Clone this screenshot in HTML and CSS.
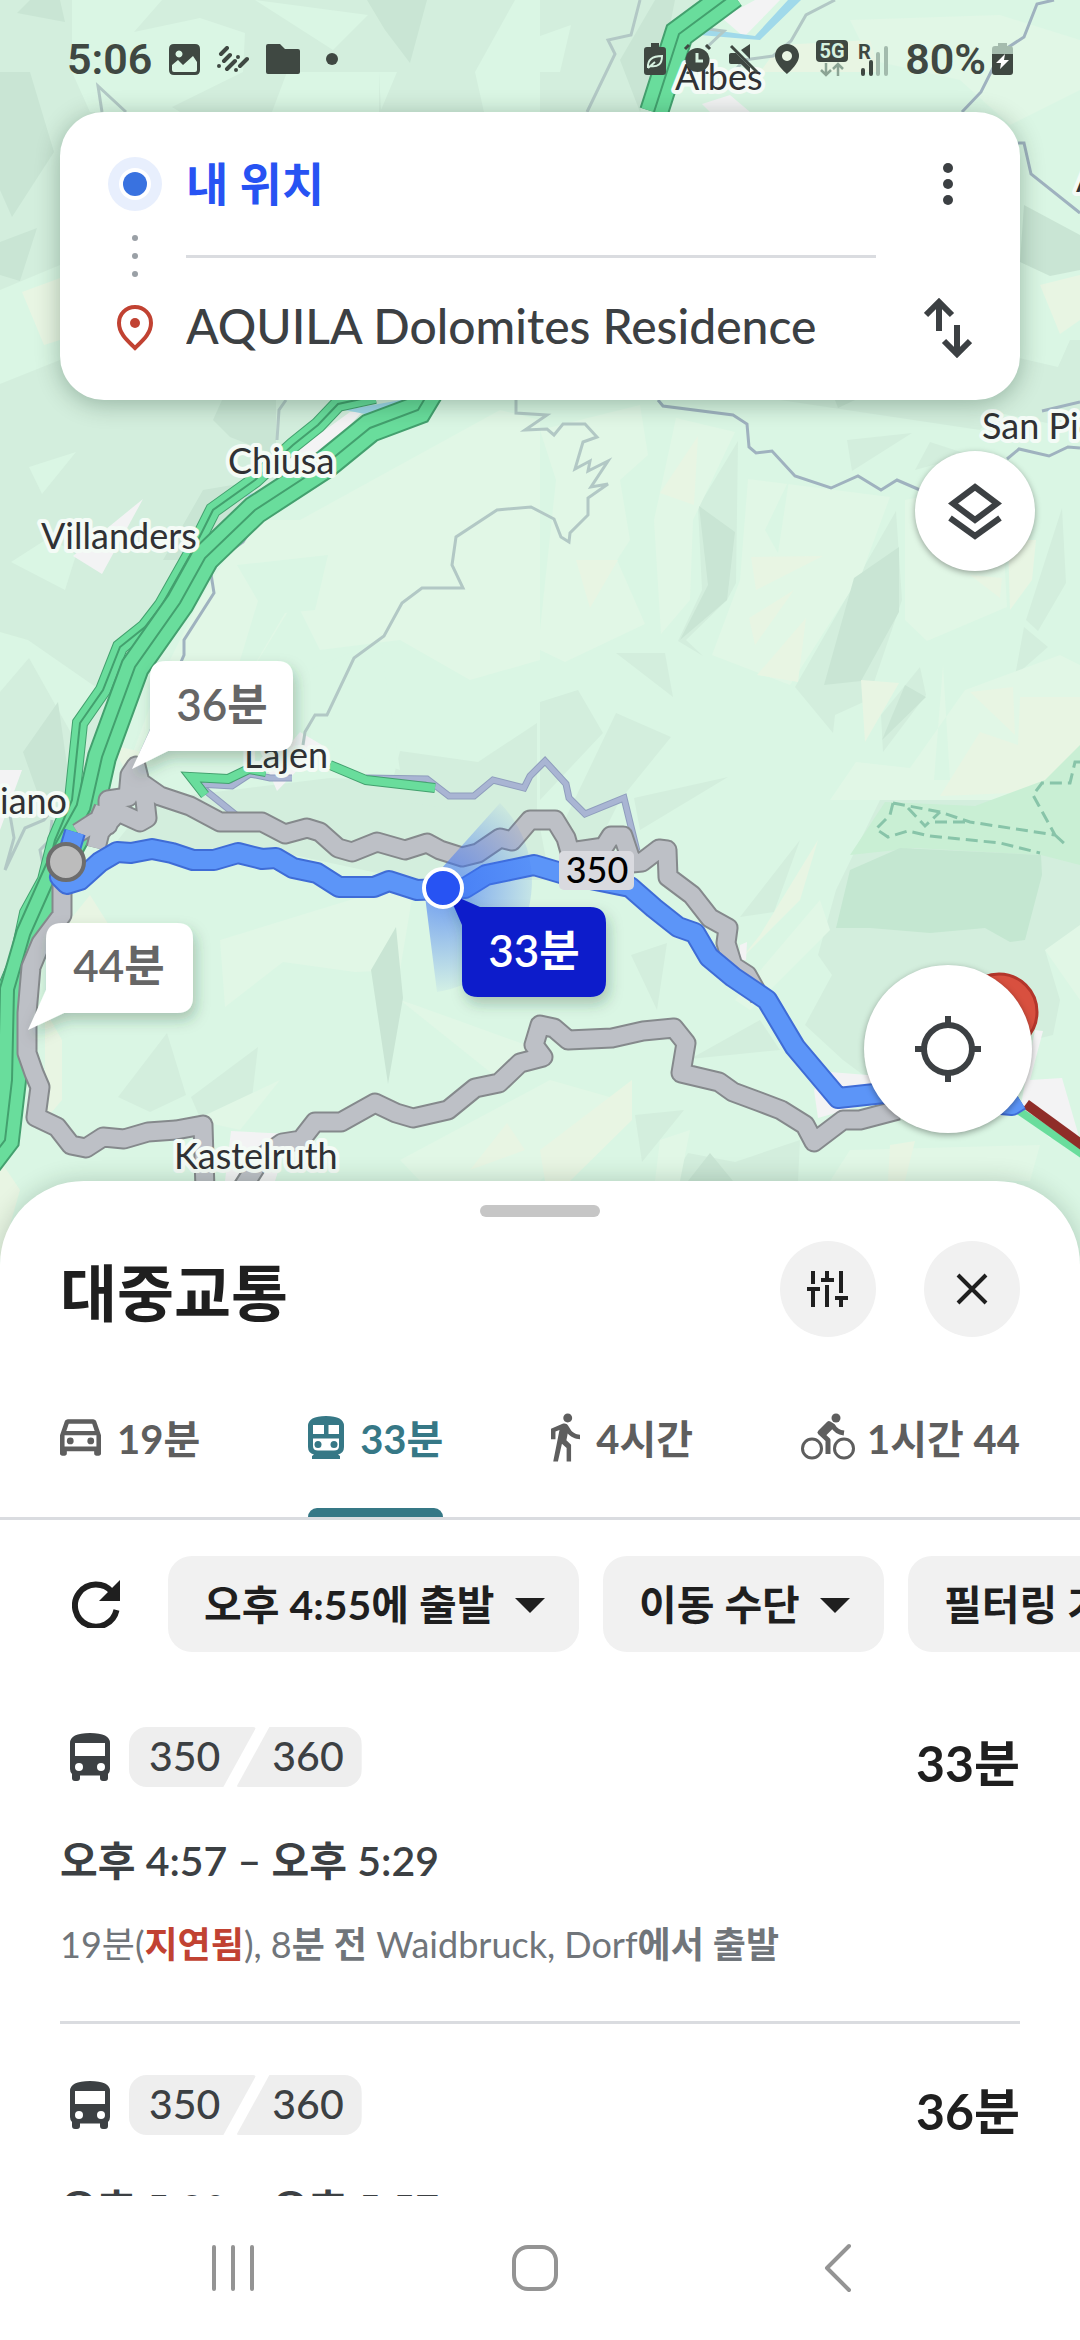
FILE: index.html
```html
<!DOCTYPE html>
<html lang="ko">
<head>
    <meta charset="UTF-8">
    <meta name="viewport" content="width=device-width, initial-scale=1.0">
    <title>대중교통 길찾기</title>
    <link rel="stylesheet" href="styles.css">
</head>
<body>
<div class="screen">
    <main class="map-area">
        <svg class="map" viewBox="0 0 1080 1265" preserveAspectRatio="xMinYMin slice" aria-hidden="true">
            <defs>
                <radialGradient id="beam" gradientUnits="userSpaceOnUse" cx="443" cy="889" r="110">
                    <stop offset="0" stop-color="#3d74f5" stop-opacity=".7"/>
                    <stop offset="1" stop-color="#3d74f5" stop-opacity="0"/>
                </radialGradient>
                <filter id="shadow" x="-20%" y="-20%" width="140%" height="150%">
                    <feDropShadow dx="3" dy="7" stdDeviation="7" flood-color="#1c4030" flood-opacity=".28"/>
                </filter>
            </defs>
            <!-- terrain -->
            <rect width="1080" height="1265" fill="#daf6e4"/>
            <g class="mid">
                <path d="M0 0H720L650 112 410 400 250 510 130 690 70 850 0 1010z"/>
                <path d="M150 800 330 778 440 782 530 775 550 880 410 880 270 850 110 850z"/>
                <path d="M540 702 578 690 603 733 540 800zM616 713 671 737 620 800 590 860 560 830zM616 653H665L673 697zM847 440 912 433 852 471zM930 442 970 455 915 470zM896 511 902 600 868 700 835 715 833 733 795 687z"/>
                <path d="M738 441 736 583 727 600 686 640 703 656 678 641 702 590 698 507zM920 667 926 695 883 752 881 715zM1062 508 1066 583 1038 631 1026 620zM1024 627 1048 647 1015 676zM388 800 400 751 478 762 537 723V820zM634 798 728 777 640 830z"/>
                <path d="M843 1060 805 1025 832 975 818 955 836 890 880 800 1080 790V955L1045 950 1060 1000 1053 1035 870 1080z"/>
                <path d="M167 1033 186 1095 150 1112 118 1097zM258 1047 252 1098 200 1118 191 1097zM740 917 800 840 774 912zM631 955 667 943 657 1010zM690 1059 760 1020 780 1050zM635 1115 684 1110 642 1162zM688 1153 735 1162 800 1140 798 1181H670zM1015 357 1058 367 1070 340 1080 340V430L985 410zM780 400 860 390 1000 400 980 430z"/>
            </g>
            <g class="base">
                <path d="M72 0H162L134 32 200 18 245 33 243 72 172 107 180 112H90L72 72zM255 0 368 15 333 50zM287 72H379L379 112H272zM379 72H397L381 110zM515 0H540V72L475 72zM475 72H540V112H484zM540 36 571 25 560 72H540z"/>
                <path d="M29 467 76 452 42 494zM50 537 11 562 65 590 76 555zM0 632 28 640 100 690 75 740 29 658 0 692zM0 110 20 104V155L0 162zM0 290 60 265V360L0 384z"/>
            </g>
            <g class="light">
                <path d="M300 520 500 410 540 420V660L470 680 400 640 320 650 295 600 240 690 150 760 130 760 160 680 200 600 250 520zM540 630 556 480 540 430 640 405 648 455 620 480 630 540 617 560 645 624 565 662 540 650z"/>
                <path d="M676 418 735 432 693 520 690 600 661 634 654 520zM748 479 890 497 862 573 790 685 712 655 740 580zM905 500 1000 480 1007 607 927 641 905 620zM830 800 856 762 910 768 965 690 1060 655 1080 665V800zM943 665 934 780 950 780z"/>
                <path d="M220 940 415 880 400 970 355 972 283 962 225 1007zM415 1005 540 1050 500 1080 400 1000zM195 1120 280 1080 240 1130zM850 20 1000 15 1080 40V90L1010 125 960 80 870 60zM620 1100 550 1080 400 1160 420 1181H540zM820 900 735 1000 750 1010 830 930zM1045 950 1080 925V1000zM660 1140 690 1130 680 1181H655zM850 1150 1040 1145 1030 1181H830z"/>
            </g>
            <path class="base" d="M237 565 328 555 315 610 285 613 222 720 258 601zM789 480 778 553 765 530zM380 640 400 770 310 740 285 680z"/>
            <g class="dark">
                <path d="M367 0H427L410 63 385 30zM0 72H30L54 152 12 217 0 190zM30 0H60L65 22 17 13zM0 242 37 228 20 281 0 275zM655 0H675L667 40 640 112 620 60zM222 400H276V455L230 437 213 420zM203 490 262 480 200 560 163 560zM58 702 72 800H40L23 752zM1024 205 1080 235V270L1050 276 1020 262zM835 400H855L838 408z"/>
                <path d="M699 506 735 532 727 600 680 640 708 585zM899 547V612L861 681 824 685 854 578zM905 685 926 697 882 740zM396 927 403 998 388 1084 371 970zM710 1153 733 1181H688z"/>
            </g>
            <g class="sand">
                <path d="M698 436 694 505 660 493zM751 557 823 556 756 590zM749 618 794 590 755 645zM806 618 798 682 757 675zM861 680 899 683 865 742zM576 560H618L590 608zM970 575 1002 578 1000 598zM1008 540H1036L1032 580 1010 610zM940 796 980 732 1018 745 1020 697H1080V790zM970 692 1013 687 1015 735zM760 72 780 45 870 40 880 72zM1040 285 1080 275V320L1060 334z"/>
                <path d="M22 292 60 278V340L44 345zM90 895 112 930 70 980V920zM45 1010 62 1040V1100L45 1120zM112 745 142 752 125 770zM632 1080V1120L570 1181H545L540 1150zM507 1123 525 1150 470 1170zM890 1145 915 1141 905 1181H888zM0 1160 20 1190 0 1260zM818 840 760 935 740 960 800 900z"/>
            </g>
            <path fill="#c9efd4" d="M885 802 975 806 1045 780 1080 745V865L1041 855 915 848 850 855z"/>
            <path fill="#c4e7d1" d="M850 870 900 848 1041 855 1042 875 1025 940 1010 942 985 928 930 933 870 928 836 928z"/>
            <g fill="#f3f3f4">
                <path d="M722 18 755 0H780L744 37zM702 104 730 95 750 112H710zM350 412 362 412 325 452 250 480 270 470zM143 499 102 574 73 556zM0 770 22 770 0 830zM300 732 322 745 277 791 268 770zM231 1131 290 1134 275 1181H225zM740 945 747 942 746 960 740 960zM830 1072 880 1076V1100L818 1118 814 1090zM1035 1030 1043 1031 1030 1080 1062 1078 1080 1140 1050 1138 1020 1110z"/>
            </g>
            <path fill="#a0d9ea" d="M788 0H801L760 40 735 38 700 35 706 29 755 36zM345 410 412 398 370 415zM240 497 275 487 262 495z"/>

            <!-- minor roads -->
            <g class="lane">
                <path d="M640 0 631 35 608 40 615 54 587 112M102 112 98 86 126 112M835 0 806 15 791 41 773 56 744 60 727 80M700 28 724 31 706 48"/>
                <path d="M516 400V413L547 415 525 430 547 429 554 435 563 424H585L597 437 583 442 575 469 590 461 588 471 608 461 591 487 608 484 588 498V515L570 533 569 542 561 537 554 519 531 507 497 510 456 537 452 565 463 588H422L402 603 384 636 354 658 327 715H315L305 732 303 745M286 400 279 410 277 440"/>
                <path d="M10 815 14 838 5 870 25 828 44 820 52 810M52 820 50 840 40 850 46 880"/>
            </g>
            <g class="road">
                <path d="M1054 0 1037 4 1024 37 1001 52 981 92 962 112M1018 143H1024L1031 174 1080 213M658 400 663 406 733 415 747 424 749 447 756 453 772 451 795 476 831 488 858 476 881 490 897 480 920 490M1007 459 1019 449 1049 456 1068 447 1080 448M1042 411 1080 402M254 525 243 542 222 557 211 574 214 593 184 640V655L181 662M152 728 140 755"/>
            </g>
            <g class="street">
                <path id="street" d="M191 777 205 790 236 815M198 784 232 786 250 774 270 778 292 778M366 778 427 779 449 796H474L493 780 524 788 530 776 545 761 566 784 569 798 585 814 624 798 637 851"/>
                <use class="street-fill" href="#street"/>
            </g>
            <g class="green small">
                <path id="lajen" d="M205 795 191 777 228 779 249 769 266 772M330 765 366 780 435 788"/>
                <use class="green-fill" href="#lajen"/>
            </g>

            <!-- motorway and state road -->
            <g class="green thin">
                <path id="west" d="M375 396 338 404 318 425 293 445 255 480 213 510 193 550 162 605 145 627 120 647 103 690 80 723 72 800 55 840 45 880 27 913 17 960 0 1000"/>
                <use class="green-fill" href="#west"/>
                <use class="green-mid" href="#west"/>
            </g>
            <g class="green wide">
                <path id="east" d="M733 -6 679 34 654 112M436 380 418 410 370 428 327 463 255 510 205 558 180 603 135 667 102 757 90 810 68 850 50 890 30 935 14 990 12 1080 5 1140 -14 1165"/>
                <use class="green-fill" href="#east"/>
                <use class="green-mid" href="#east"/>
            </g>
            <path fill="none" stroke="#69dd9c" stroke-width="8" d="M1018 1110 1085 1156"/>
            <path fill="none" stroke="#8f2d28" stroke-width="10" d="M1026 1104 1085 1147"/>

            <!-- park outline -->
            <path class="park" d="M893 803 890 815 876 829 888 837 908 831 930 836 1000 843 1040 853M893 803 940 812 970 822 1055 835 1033 795 1042 783H1070L1075 762H1085M908 808 925 826 940 812M935 822H970M1055 835 1066 845"/>

            <!-- alternative routes -->
            <g class="alt">
                <path id="alt-north" d="M78 833 95 822 108 825 108 800 128 797 130 775 136 766 140 782 160 796 190 806 220 822H262L285 834 307 828 320 832 338 848 352 852 377 842 405 850 427 843 440 850 462 857 478 853 500 838 512 841 530 820 555 820 566 838 570 852 604 847 611 836H623L632 863 642 862 659 849 667 850 668 877 692 895 710 918 728 928 726 943 733 966 747 975 760 998M136 775 145 800 147 818 140 822 118 812 100 832 96 848M104 808 92 836"/>
                <path id="alt-south" d="M62 880 62 915 41 943 31 967 27 1013V1053L34 1073 40 1087 36 1117 57 1127 71 1145 86 1148 103 1137 124 1139 148 1132 176 1130 203 1125 205 1190M241 1190 262 1157 282 1143 301 1140 315 1122H341L375 1103 396 1113 413 1118 448 1110 475 1088 499 1083 520 1063 543 1057 534 1045 540 1025 554 1028 568 1040 612 1038 643 1031 674 1028 686 1043 681 1073 719 1082 733 1092 760 1102 781 1110 805 1125 814 1142 843 1120H860L898 1110"/>
                <use class="alt-fill" href="#alt-north"/>
                <use class="alt-fill" href="#alt-south"/>
            </g>

            <!-- selected route -->
            <g class="route">
                <path id="route" d="M75 832 66 862 60 877 67 884 80 880 100 862 117 852 131 853 152 849 172 853 193 860H214L238 853 262 859 276 858 293 868 317 873 339 887H374L389 881 417 890 443 889 465 888 486 875 510 870 534 865 561 873 630 887 654 908 678 927 695 933 709 957 733 977 767 1000 795 1047 838 1098 884 1093 1012 1105 1020 1100"/>
                <use class="route-fill" href="#route"/>
            </g>
            <path fill="url(#beam)" d="M424 888 500 803A112 112 0 0 1 437 992z"/>

            <!-- place names -->
            <g class="place">
                <text x="675" y="90">Albes</text>
                <text x="228" y="474">Chiusa</text>
                <text x="41" y="549">Villanders</text>
                <text x="244" y="768">Lajen</text>
                <text x="0" y="814">iano</text>
                <text x="174" y="1169">Kastelruth</text>
                <text x="982" y="439">San Pietro</text>
                <text x="1076" y="192">A</text>
            </g>
            <rect x="559" y="851" width="75" height="39" rx="5" fill="#d9dadf"/>
            <text class="line-no" x="597" y="883">350</text>

            <!-- markers -->
            <circle cx="66" cy="862" r="18" fill="#bcbcbc" stroke="#6d6d6d" stroke-width="4"/>
            <circle cx="999" cy="1012" r="38" fill="#d8503f" stroke="#b3362b" stroke-width="3"/>

            <!-- travel time callouts -->
            <g filter="url(#shadow)">
                <path fill="#fff" d="M166 661H277Q293 661 293 677V735Q293 751 277 751H168L132 769 150 730V677Q150 661 166 661z"/>
                <path fill="#fff" d="M62 923H177Q193 923 193 939V997Q193 1013 177 1013H64L28 1030 46 990V939Q46 923 62 923z"/>
                <path fill="#0b1bcb" d="M480 907H590Q606 907 606 923V981Q606 997 590 997H478Q462 997 462 981V925L448 893z"/>
            </g>
            <text class="callout" x="222" y="721">36분</text>
            <text class="callout" x="119" y="982">44분</text>
            <text class="callout on" x="534" y="967">33분</text>
            <circle cx="443" cy="888" r="19" fill="#2753f3" stroke="#fff" stroke-width="4"/>
        </svg>

        <header class="status-bar">
            <div class="status-group">
                <span class="clock">5:06</span>
                <svg width="31" height="31" viewBox="0 0 31 31"><path fill="currentColor" fill-rule="evenodd" d="M5 0H26Q31 0 31 5V26Q31 31 26 31H5Q0 31 0 26V5Q0 0 5 0zM10 6.500a3.500 3.500 0 1 0 .01 0zM3 21V26Q3 28 5 28H26Q28 28 28 26V18L24 12 14 21 9 16z"/></svg>
                <svg width="32" height="26" viewBox="0 0 32 26" fill="none" stroke="currentColor" stroke-width="4" stroke-linecap="round"><path d="M4 8 10 2M2 20 2 20M7 15 13 9M10 23 18 15M21 11 21 11M19 24 19 24M23 20 30 13"/></svg>
                <svg width="34" height="30" viewBox="0 0 34 30" fill="currentColor"><path d="M2 0H14L19 5H32Q34 5 34 7V28Q34 30 32 30H2Q0 30 0 28V2Q0 0 2 0z"/></svg>
                <span class="more-dot"></span>
            </div>
            <div class="status-group">
                <svg width="22" height="32" viewBox="0 0 22 32"><path fill="currentColor" d="M7 0H15V4H19Q22 4 22 7V29Q22 32 19 32H3Q0 32 0 29V7Q0 4 3 4H7z"/><path d="M4 25Q3 13 18 13 18 25 6 23M4 25 11 19" fill="none" stroke="#d6f1e0" stroke-width="2"/></svg>
                <svg width="29" height="30" viewBox="0 0 29 30"><circle cx="14.500" cy="16" r="12" fill="currentColor"/><path d="M2 5 6 1M27 5 23 1M6 28 4 30M23 28 25 30" stroke="currentColor" stroke-width="3"/><path d="M14 9V17H20" fill="none" stroke="#d6f1e0" stroke-width="3"/></svg>
                <svg width="29" height="30" viewBox="0 0 29 30" fill="currentColor"><path d="M2 9H7L21 23V29L12 20H2Q0 20 0 18V11Q0 9 2 9zM12 6 21 0V15z"/><path d="M2 2 28 28" stroke="currentColor" stroke-width="3"/></svg>
                <svg width="24" height="30" viewBox="0 0 24 30"><path fill="currentColor" fill-rule="evenodd" d="M12 0A12 12 0 0 1 24 12C24 20 12 30 12 30S0 20 0 12A12 12 0 0 1 12 0zM12 7a5 5 0 1 0 .01 0z"/></svg>
                <svg class="signal" width="72" height="38" viewBox="0 0 72 38"><rect width="32" height="22" rx="4" fill="currentColor"/><text class="net" x="16" y="18">5G</text><g fill="none" stroke="#8ba494" stroke-width="2.500"><path d="M10 23V35M5 30 10 35 15 30M22 36V24M17 29 22 24 27 29"/></g><text class="roam" x="42" y="19">R</text><path d="M47 30V34M55 22V34" stroke="currentColor" stroke-width="4" stroke-linecap="round"/><path d="M62 14V34M70 8V34" stroke="#a3bbad" stroke-width="4" stroke-linecap="round"/></svg>
                <span class="battery">
                    <span class="clock">80%</span>
                    <svg width="21" height="32" viewBox="0 0 21 32"><path fill="#a5bcae" d="M6 0H15V3H18Q21 3 21 6V12H0V6Q0 3 3 3H6z"/><path fill="currentColor" d="M0 11H21V29Q21 32 18 32H3Q0 32 0 29z"/><path fill="#fff" d="M13 11 4 20H9L8 26 17 17H12z"/></svg>
                </span>
            </div>
        </header>

        <form class="search-card">
            <label class="lead" for="from">
                <svg width="54" height="54" viewBox="0 0 54 54"><circle cx="27" cy="27" r="27" fill="#e8effd"/><circle cx="27" cy="27" r="16" fill="#fff"/><circle cx="27" cy="27" r="12" fill="#3972e0"/></svg>
            </label>
            <input class="place-input from" id="from" type="text" value="내 위치" aria-label="출발지">
            <button class="icon-button" type="button" aria-label="더보기">
                <svg width="12" height="44" viewBox="0 0 12 44" fill="#3c4043"><circle cx="6" cy="6" r="5"/><circle cx="6" cy="22" r="5"/><circle cx="6" cy="38" r="5"/></svg>
            </button>
            <div class="lead">
                <svg width="6" height="42" viewBox="0 0 6 42" fill="#9aa0a6"><circle cx="3" cy="3" r="3"/><circle cx="3" cy="21" r="3"/><circle cx="3" cy="39" r="3"/></svg>
            </div>
            <hr class="divider">
            <span></span>
            <label class="lead" for="to">
                <svg width="36" height="46" viewBox="0 0 36 46"><path d="M18 2C27 2 34 9 34 18 34 29 25 36 18 43 11 36 2 29 2 18 2 9 9 2 18 2z" fill="none" stroke="#c14232" stroke-width="4"/><circle cx="18" cy="18" r="5" fill="#c14232"/></svg>
            </label>
            <input class="place-input" id="to" type="text" value="AQUILA Dolomites Residence" aria-label="도착지">
            <button class="icon-button" type="button" aria-label="출발지와 도착지 바꾸기">
                <svg width="48" height="60" viewBox="0 0 48 60" fill="none" stroke="#3c4043" stroke-width="6"><path d="M15 33V5M2 17 15 4 28 17M33 27V55M20 43 33 56 46 43"/></svg>
            </button>
        </form>

        <button class="layers" aria-label="지도 레이어">
            <svg width="54" height="58" viewBox="0 0 54 58" fill="none" stroke="#3c4043" stroke-width="6"><path d="M27 5 49 21.500 27 38 5 21.500zM2 36 27 54 52 36"/></svg>
        </button>
        <button class="locate" aria-label="현재 위치">
            <svg width="66" height="66" viewBox="0 0 66 66" fill="none" stroke="#3c4043" stroke-width="6"><circle cx="33" cy="33" r="24"/><path d="M33 0V10M33 56V66M0 33H10M56 33H66"/></svg>
        </button>
    </main>

    <section class="sheet">
        <div class="handle"></div>
        <div class="sheet-head">
            <h1>대중교통</h1>
            <button class="round" aria-label="옵션">
                <svg width="42" height="36" viewBox="0 0 42 36" fill="none" stroke="#1f1f1f" stroke-width="4"><path d="M6 0V13M0 18H13M6 18V36M20 0V8M14 9H27M20 14V36M34 0V22M28 27H41M34 27V36"/></svg>
            </button>
            <button class="round" aria-label="닫기">
                <svg width="32" height="32" viewBox="0 0 32 32" fill="none" stroke="#1f1f1f" stroke-width="4"><path d="M2 2 30 30M30 2 2 30"/></svg>
            </button>
        </div>

        <nav class="tabs">
            <button class="tab">
                <svg width="41" height="37" viewBox="3 4 18 16" fill="currentColor"><path d="M18.920 5.010C18.720 4.420 18.160 4 17.500 4h-11c-.66 0-1.210.42-1.420 1.010L3 11v8c0 .55.45 1 1 1h1c.55 0 1-.45 1-1v-1h12v1c0 .55.45 1 1 1h1c.55 0 1-.45 1-1v-8zM6.850 6h10.290l1.080 3.110H5.770zM19 16H5v-5h14z"/><circle cx="7.500" cy="13.500" r="1.500"/><circle cx="16.500" cy="13.500" r="1.500"/></svg>
                19분
            </button>
            <button class="tab active">
                <svg width="36" height="43" viewBox="0 0 36 43" fill="currentColor"><path fill-rule="evenodd" d="M0 10Q0 0 18 0T36 10V31Q36 37 30 38.500L32 40V43H4V40L6 38.500Q0 37 0 31zM5 9V18H16V9zM20.500 9V18H31V9zM5 22.500V30Q5 34.500 10 34.500H26Q31 34.500 31 30V22.500z"/><circle cx="10" cy="28.500" r="3.500"/><circle cx="26" cy="28.500" r="3.500"/></svg>
                33분
            </button>
            <button class="tab">
                <svg width="29" height="49" viewBox="6 1.500 13 21.500" fill="currentColor"><path d="M13.500 5.500c1.100 0 2-.9 2-2s-.9-2-2-2-2 .9-2 2 .9 2 2 2zM9.800 8.900L7 23h2.100l1.800-8 2.100 2v6h2v-7.500l-2.100-2 .6-3C14.800 12 16.800 13 19 13v-2c-1.900 0-3.500-1-4.300-2.400l-1-1.600c-.4-.6-1-1-1.700-1-.3 0-.5.1-.8.1L6 8.300V13h2V9.600l1.800-.7"/></svg>
                4시간
            </button>
            <button class="tab">
                <svg width="54" height="48" viewBox="0 0 54 48" fill="none" stroke="currentColor"><g stroke-width="3"><circle cx="11" cy="35.500" r="9.500"/><circle cx="43" cy="35.500" r="9.500"/></g><circle cx="35" cy="5" r="4.500" fill="currentColor" stroke="none"/><path stroke-width="5" stroke-linejoin="round" d="M43 20Q35 19 32 13L28 10.500 19 19.500 27 27V41"/><path stroke-width="5" d="M31 13 22 22"/></svg>
                1시간 44
            </button>
        </nav>

        <div class="filters">
            <button class="refresh" aria-label="새로고침">
                <svg width="48" height="48" viewBox="0 0 48 48"><path d="M40 12A21 21 0 1 0 44.500 30" fill="none" stroke="#1f1f1f" stroke-width="6"/><path d="M48 0V21H27z" fill="#1f1f1f"/></svg>
            </button>
            <label class="chip">
                <select aria-label="출발 시간"><option>오후 4:55에 출발</option></select>
                <svg width="30" height="15" viewBox="0 0 30 15"><path d="M0 0H30L15 15z" fill="#1f1f1f"/></svg>
            </label>
            <label class="chip">
                <select aria-label="이동 수단"><option>이동 수단</option></select>
                <svg width="30" height="15" viewBox="0 0 30 15"><path d="M0 0H30L15 15z" fill="#1f1f1f"/></svg>
            </label>
            <label class="chip">
                <select aria-label="필터링 기준"><option>필터링 기준</option></select>
                <svg width="30" height="15" viewBox="0 0 30 15"><path d="M0 0H30L15 15z" fill="#1f1f1f"/></svg>
            </label>
        </div>

        <ul class="results">
            <li class="result">
                <div class="lines">
                    <svg class="bus" width="40" height="48" viewBox="0 0 40 48"><path fill="#3c4043" fill-rule="evenodd" d="M0 10Q0 0 20 0T40 10V36Q40 39 38 41V45Q38 48 35 48H33Q30 48 30 45V42.500H10V45Q10 48 7 48H5Q2 48 2 45V41Q0 39 0 36zM5 10V23H35V10z"/><circle cx="9" cy="34" r="4" fill="#fff"/><circle cx="31" cy="34" r="4" fill="#fff"/></svg>
                    <span class="badge first">350</span>
                    <span class="badge last">360</span>
                    <strong class="duration">33분</strong>
                </div>
                <p class="times">오후 4:57 – 오후 5:29</p>
                <p class="depart">19분(<b class="late">지연됨</b>), 8<span class="strong">분 전</span> Waidbruck, Dorf<span class="strong">에서 출발</span></p>
            </li>
            <li class="result">
                <div class="lines">
                    <svg class="bus" width="40" height="48" viewBox="0 0 40 48"><path fill="#3c4043" fill-rule="evenodd" d="M0 10Q0 0 20 0T40 10V36Q40 39 38 41V45Q38 48 35 48H33Q30 48 30 45V42.500H10V45Q10 48 7 48H5Q2 48 2 45V41Q0 39 0 36zM5 10V23H35V10z"/><circle cx="9" cy="34" r="4" fill="#fff"/><circle cx="31" cy="34" r="4" fill="#fff"/></svg>
                    <span class="badge first">350</span>
                    <span class="badge last">360</span>
                    <strong class="duration">36분</strong>
                </div>
                <p class="times">오후 5:20 – 오후 5:57</p>
            </li>
        </ul>

        <nav class="system-nav">
            <button aria-label="최근 앱">
                <svg width="42" height="48" viewBox="0 0 42 48" fill="none" stroke="#949494" stroke-width="4" stroke-linecap="round"><path d="M2 3V45M21 3V45M40 3V45"/></svg>
            </button>
            <button aria-label="홈">
                <svg width="48" height="48" viewBox="0 0 48 48" fill="none" stroke="#949494" stroke-width="4"><rect x="3" y="3" width="42" height="42" rx="14"/></svg>
            </button>
            <button aria-label="뒤로">
                <svg width="28" height="50" viewBox="0 0 28 50" fill="none" stroke="#949494" stroke-width="4" stroke-linecap="round" stroke-linejoin="round"><path d="M25 3 3 25 25 47"/></svg>
            </button>
        </nav>
    </section>
</div>
</body>
</html>
```
FILE: styles.css
```css
* {
    box-sizing: border-box;
}
body {
    margin: 0;
    background: #fff;
    color: #1f1f1f;
    font-family: Lato, "Noto Sans CJK KR", sans-serif;
    font-size: 40px;
}
button {
    display: flex;
    align-items: center;
    justify-content: center;
    padding: 0;
    border: none;
    background: none;
    color: inherit;
    font: inherit;
    cursor: pointer;
}
svg {
    flex: none;
    display: block;
}
.screen {
    display: flex;
    flex-direction: column;
    height: 100vh;
    overflow: hidden;
}

/* Map */
.map-area {
    position: relative;
    flex: 1;
    display: flex;
    flex-direction: column;
    padding-bottom: 132px;
}
.map {
    position: absolute;
    top: 0;
    left: 0;
    width: 100%;
    height: 100%;
}
.mid { fill: #d3eedd; }
.base { fill: #daf6e4; }
.light { fill: #e1f7e6; }
.dark { fill: #c9e5d4; }
.sand { fill: #e8f5e3; }
.lane {
    fill: none;
    stroke: #b2c8c5;
    stroke-width: 3;
}
.road {
    fill: none;
    stroke: #9fb2bf;
    stroke-width: 3;
}
.street {
    fill: none;
    stroke: #8f9dbd;
    stroke-width: 7;
}
.street-fill {
    stroke: #a9b5d3;
    stroke-width: 5;
}
.green {
    fill: none;
    stroke: #43a06e;
}
.green-fill { stroke: #69dd9c; }
.green-mid {
    stroke: #43a06e;
    stroke-width: 2;
}
.small { stroke-width: 10; }
.small .green-fill { stroke-width: 8; }
.thin { stroke-width: 16; }
.thin .green-fill { stroke-width: 14; }
.wide { stroke-width: 30; }
.wide .green-fill { stroke-width: 26; }
.park {
    fill: none;
    stroke: #88c4a9;
    stroke-width: 3;
    stroke-dasharray: 12 6;
}
.alt {
    fill: none;
    stroke: #85898c;
    stroke-width: 21;
    stroke-linejoin: round;
}
.alt-fill {
    stroke: #bdc0c6;
    stroke-width: 17;
}
.route {
    fill: none;
    stroke: #3f6cd6;
    stroke-width: 22;
    stroke-linejoin: round;
}
.route-fill {
    stroke: #5c95f8;
    stroke-width: 18;
}
.place {
    fill: #303134;
    stroke: #f4fbf6;
    stroke-width: 8;
    stroke-linejoin: round;
    paint-order: stroke;
    font-size: 36px;
}
.line-no {
    font-size: 36px;
    font-weight: 500;
    text-anchor: middle;
}
.callout {
    fill: #666;
    font-size: 44px;
    font-weight: 600;
    text-anchor: middle;
}
.callout.on { fill: #fff; }

/* Status bar */
.status-bar {
    position: relative;
    display: flex;
    align-items: center;
    justify-content: space-between;
    height: 112px;
    padding: 6px 67px 0;
    color: #3f4842;
    font-family: Roboto, sans-serif;
}
.status-group {
    display: flex;
    align-items: center;
    gap: 17px;
}
.clock {
    font-size: 43px;
    font-weight: 600;
    line-height: 48px;
}
.more-dot {
    width: 12px;
    height: 12px;
    margin-left: 9px;
    border-radius: 50%;
    background: currentColor;
}
.battery {
    display: flex;
    align-items: center;
    gap: 6px;
}
.signal {
    overflow: visible;
}
.net {
    fill: #d6f1e0;
    font-size: 20px;
    font-weight: 700;
    text-anchor: middle;
}
.roam {
    fill: currentColor;
    font-size: 20px;
    font-weight: 700;
}

/* Search card */
.search-card {
    position: relative;
    display: grid;
    grid-template-columns: 102px 1fr 144px;
    grid-template-rows: 96px 48px 96px;
    align-items: center;
    margin: 0 60px;
    padding: 24px 0 24px 24px;
    border-radius: 44px;
    background: #fff;
    box-shadow: 0 4px 24px rgba(0, 40, 20, 0.3);
}
.lead {
    display: flex;
    justify-content: center;
}
.place-input {
    width: 100%;
    padding: 0 0 6px;
    border: none;
    outline: none;
    background: none;
    color: #3c4043;
    font: inherit;
    font-size: 48px;
    font-weight: 500;
}
.place-input.from {
    color: #2753f3;
    font-size: 46px;
    font-weight: 700;
}
.divider {
    width: 100%;
    margin: 0;
    border: none;
    border-top: 3px solid #dadce0;
}
.icon-button {
    height: 96px;
}
.layers, .locate {
    position: relative;
    align-self: flex-end;
    border-radius: 50%;
    background: #fff;
    box-shadow: 0 2px 6px rgba(0, 0, 0, 0.35);
}
.layers {
    width: 120px;
    height: 120px;
    margin: 51px 45px 0 0;
}
.locate {
    width: 168px;
    height: 168px;
    margin: auto 48px 0 0;
}

/* Bottom sheet */
.sheet {
    position: relative;
    margin-top: -84px;
    padding-top: 24px;
    border-radius: 84px 84px 0 0;
    background: #fff;
    box-shadow: 0 0 24px rgba(0, 40, 20, 0.2);
}
.handle {
    width: 120px;
    height: 12px;
    margin: 0 auto;
    border-radius: 6px;
    background: #c6c6c6;
}
.sheet-head {
    display: flex;
    align-items: center;
    gap: 48px;
    padding: 24px 60px 0;
}
.sheet-head h1 {
    flex: 1;
    margin: 0;
    padding-top: 8px;
    font-size: 62px;
    font-weight: 700;
    line-height: 88px;
}
.round {
    width: 96px;
    height: 96px;
    border-radius: 50%;
    background: #f1f1f1;
}
.tabs {
    display: flex;
    justify-content: space-between;
    padding: 0 60px;
    border-bottom: 3px solid #dadce0;
    color: #5e5e5e;
}
.tab {
    position: relative;
    gap: 16px;
    height: 180px;
    padding-top: 20px;
    font-weight: 700;
    white-space: nowrap;
}
.tab:last-child {
    gap: 12px;
}
.tab.active {
    color: #367886;
}
.tab.active::after {
    content: "";
    position: absolute;
    bottom: 0;
    left: 0;
    width: 100%;
    height: 9px;
    border-radius: 9px 9px 0 0;
    background: #367886;
}
.filters {
    display: flex;
    gap: 24px;
    padding: 36px 0 24px 48px;
    overflow: hidden;
}
.refresh {
    flex: none;
    width: 96px;
}
.chip {
    position: relative;
    flex: none;
}
.chip select {
    height: 96px;
    padding: 0 84px 0 36px;
    border: none;
    border-radius: 24px;
    appearance: none;
    background: #f1f1f1;
    color: inherit;
    font: inherit;
    font-size: 41px;
    font-weight: 700;
}
.chip svg {
    position: absolute;
    right: 34px;
    top: 42px;
    pointer-events: none;
}
.results {
    height: 520px;
    margin: 0;
    padding: 0 60px;
    overflow: hidden;
    list-style: none;
}
.result {
    height: 348px;
    padding-top: 51px;
    border-bottom: 3px solid #dadce0;
}
.lines {
    display: flex;
    align-items: center;
    height: 60px;
    padding-left: 10px;
    color: #3c4043;
}
.bus {
    margin-right: 19px;
}
.badge {
    height: 60px;
    background: #eee;
    font-size: 41px;
    font-weight: 500;
    line-height: 58px;
}
.first {
    padding: 0 36px 0 20px;
    border-radius: 18px 3px 3px 18px;
    clip-path: polygon(0 0, 100% 0, calc(100% - 33px) 100%, 0 100%);
}
.last {
    margin-left: -20px;
    padding: 0 18px 0 36px;
    border-radius: 3px 18px 18px 3px;
    clip-path: polygon(33px 0, 100% 0, 100% 100%, 0 100%);
}
.duration {
    margin-left: auto;
    padding-top: 6px;
    color: #1f1f1f;
    font-size: 50px;
    font-weight: 700;
}
.times, .depart {
    margin: 0;
    white-space: nowrap;
}
.times {
    margin-top: 46px;
    color: #3c4043;
    font-size: 41px;
    font-weight: 600;
    line-height: 56px;
}
.depart {
    margin-top: 31px;
    color: #70757a;
    font-size: 36px;
    line-height: 48px;
}
.strong {
    font-weight: 600;
}
.late {
    color: #c14232;
}
.system-nav {
    display: flex;
    justify-content: space-around;
    height: 144px;
    padding: 0 91px 0 82px;
}
.system-nav button {
    width: 144px;
}
```
